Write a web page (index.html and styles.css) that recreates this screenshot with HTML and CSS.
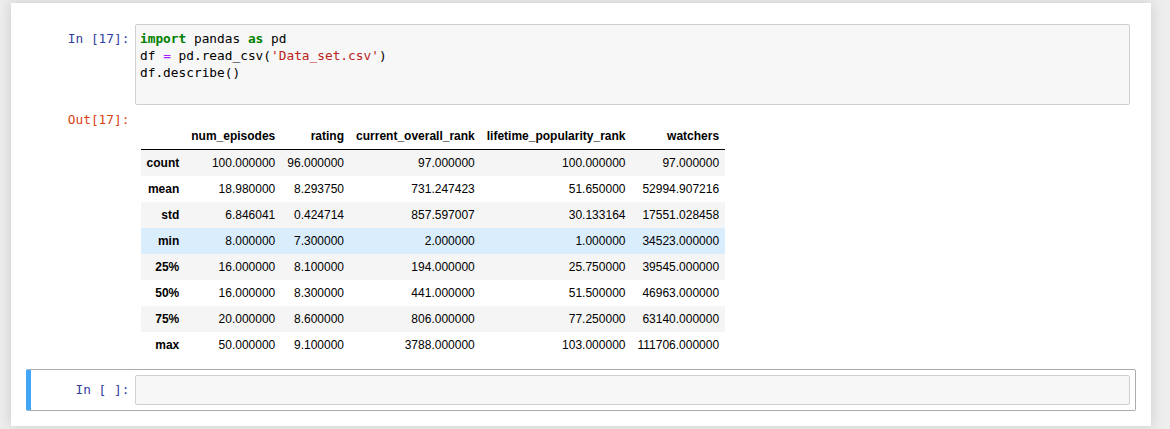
FILE: index.html
```html
<!DOCTYPE html>
<html>
<head>
<meta charset="utf-8">
<link rel="stylesheet" href="styles.css">
</head>
<body>
<div class="notebook">
  <div class="cell">
    <div class="row">
      <div class="prompt in-prompt">In&nbsp;[17]:</div>
      <div class="input-area code-box">
        <div class="code">
          <div class="line"><span class="kw">import</span><span> pandas </span><span class="kw">as</span><span> pd</span></div>
          <div class="line"><span>df </span><span class="op">=</span><span> pd.read_csv(</span><span class="str">'Data_set.csv'</span><span>)</span></div>
          <div class="line"><span>df.describe()</span></div>
        </div>
      </div>
    </div>
    <div class="row">
      <div class="prompt out-prompt">Out[17]:</div>
      <div class="output-sub">
        <table class="df">
          <thead>
            <tr><th></th><th>num_episodes</th><th>rating</th><th>current_overall_rank</th><th>lifetime_popularity_rank</th><th>watchers</th></tr>
          </thead>
          <tbody>
            <tr><th>count</th><td>100.000000</td><td>96.000000</td><td>97.000000</td><td>100.000000</td><td>97.000000</td></tr>
            <tr><th>mean</th><td>18.980000</td><td>8.293750</td><td>731.247423</td><td>51.650000</td><td>52994.907216</td></tr>
            <tr><th>std</th><td>6.846041</td><td>0.424714</td><td>857.597007</td><td>30.133164</td><td>17551.028458</td></tr>
            <tr class="hover"><th>min</th><td>8.000000</td><td>7.300000</td><td>2.000000</td><td>1.000000</td><td>34523.000000</td></tr>
            <tr><th>25%</th><td>16.000000</td><td>8.100000</td><td>194.000000</td><td>25.750000</td><td>39545.000000</td></tr>
            <tr><th>50%</th><td>16.000000</td><td>8.300000</td><td>441.000000</td><td>51.500000</td><td>46963.000000</td></tr>
            <tr><th>75%</th><td>20.000000</td><td>8.600000</td><td>806.000000</td><td>77.250000</td><td>63140.000000</td></tr>
            <tr><th>max</th><td>50.000000</td><td>9.100000</td><td>3788.000000</td><td>103.000000</td><td>111706.000000</td></tr>
          </tbody>
        </table>
      </div>
    </div>
  </div>
  <div class="cell selected">
    <div class="row">
      <div class="prompt in-prompt">In&nbsp;[&nbsp;]:</div>
      <div class="input-area empty-box"></div>
    </div>
  </div>
</div>
</body>
</html>
```
FILE: styles.css
```css
html, body {
  margin: 0;
  padding: 0;
  background: #eeeeee;
  height: 100%;
  overflow: hidden;
}
.notebook {
  box-sizing: border-box;
  width: 1140px;
  margin: 3px 0 0 11px;
  padding: 15px;
  background: #ffffff;
  box-shadow: 0 0 12px 1px rgba(87, 87, 87, 0.2);
}
.cell {
  box-sizing: border-box;
  display: flex;
  flex-direction: column;
  border: 1px solid transparent;
  border-radius: 2px;
  padding: 5px;
}
.cell.selected {
  border-color: #ababab;
  border-left: 5px solid #42a5f5;
  padding-left: 1px;
}
.row {
  display: flex;
  flex-direction: row;
  align-items: flex-start;
}
.prompt {
  box-sizing: border-box;
  flex: 0 0 103px;
  width: 103px;
  padding: 5.6px 5.6px 0 0;
  text-align: right;
  font-family: "DejaVu Sans Mono", monospace;
  font-size: 12.8px;
  line-height: 17px;
  white-space: nowrap;
}
.in-prompt { color: #303f9f; }
.out-prompt { color: #d84315; }
.input-area {
  box-sizing: border-box;
  flex: 1;
  background: #f7f7f7;
  border: 1px solid #cfcfcf;
  border-radius: 2px;
}
.code-box { height: 81px; }
.empty-box { height: 30px; }
.code {
  padding: 4.6px 4px;
  font-family: "DejaVu Sans Mono", monospace;
  font-size: 12.8px;
  line-height: 17px;
  color: #000000;
}
.line {
  white-space: pre;
  height: 17px;
}
.kw { color: #008000; font-weight: 600; }
.op { color: #aa22ff; }
.str { color: #ba2121; }
.output-sub {
  flex: 1;
  padding: 5.6px;
}
.df {
  margin-top: 12px;
  border-collapse: collapse;
  border-spacing: 0;
  font-family: "Liberation Sans", Arial, sans-serif;
  font-size: 12px;
  color: #000000;
}
.df th, .df td {
  padding: 6px;
  line-height: 14px;
  text-align: right;
  vertical-align: middle;
  white-space: nowrap;
  border: none;
}
.df th { font-weight: bold; }
.df thead { border-bottom: 1px solid #000000; }
.df tbody tr:nth-child(odd) { background: #f5f5f5; }
.df tbody tr.hover { background: #d9edfd; }
```
